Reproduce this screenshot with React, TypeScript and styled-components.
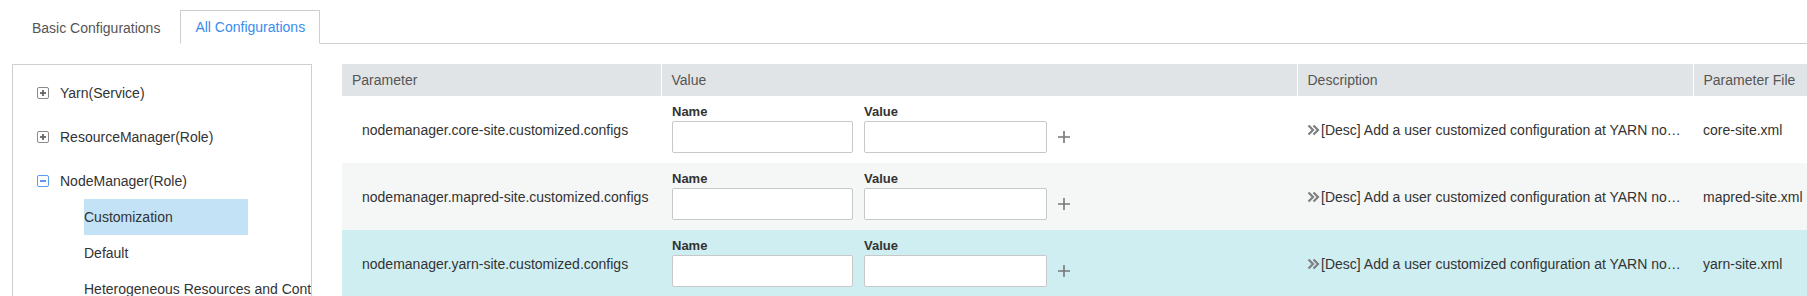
import React from 'react';
import styled, { createGlobalStyle } from 'styled-components';

interface ConfigRow {
  parameter: string;
  description: string;
  file: string;
}

const rows: ConfigRow[] = [
  {
    parameter: 'nodemanager.core-site.customized.configs',
    description: '[Desc] Add a user customized configuration at YARN nodemanager level to core-site.xml',
    file: 'core-site.xml',
  },
  {
    parameter: 'nodemanager.mapred-site.customized.configs',
    description: '[Desc] Add a user customized configuration at YARN nodemanager level to mapred-site.xml',
    file: 'mapred-site.xml',
  },
  {
    parameter: 'nodemanager.yarn-site.customized.configs',
    description: '[Desc] Add a user customized configuration at YARN nodemanager level to yarn-site.xml',
    file: 'yarn-site.xml',
  },
];

const GlobalStyle = createGlobalStyle`
  html, body {
    margin: 0;
    padding: 0;
    background: #fff;
    overflow: hidden;
  }
  body {
    font-family: "Liberation Sans", Arial, sans-serif;
    font-size: 14px;
    color: #333;
  }
`;

const Page = styled.div`
  padding: 10px 0 0 12px;
  height: 296px;
  box-sizing: border-box;
  overflow: hidden;
`;

const TabBar = styled.div`
  display: flex;
  height: 34px;
  box-sizing: border-box;
  border-bottom: 1px solid #cfcfcf;
`;

const Tab = styled.div<{ $active?: boolean }>`
  display: flex;
  align-items: center;
  padding: 0 ${(p) => (p.$active ? '14px' : '19px')};
  height: 34px;
  box-sizing: border-box;
  font-size: 14px;
  color: ${(p) => (p.$active ? '#3b8ced' : '#555')};
  background: #fff;
  border: 1px solid ${(p) => (p.$active ? '#cfcfcf' : 'transparent')};
  border-bottom: ${(p) => (p.$active ? '1px solid #fff' : 'none')};
  margin-bottom: ${(p) => (p.$active ? '-1px' : '0')};
  white-space: nowrap;
`;

const Main = styled.div`
  display: flex;
  gap: 30px;
  margin-top: 20px;
`;

const TreePanel = styled.div`
  width: 300px;
  flex: none;
  height: 280px;
  box-sizing: border-box;
  border: 1px solid #cfcfcf;
  padding-top: 10px;
  overflow: hidden;
`;

const TreeNode = styled.div`
  display: flex;
  align-items: center;
  height: 36px;
  padding-left: 24px;
  white-space: nowrap;

  & + & {
    margin-top: 8px;
  }
`;

const ToggleIcon = styled.svg`
  width: 12px;
  height: 12px;
  margin-right: 11px;
  flex: none;
`;

const TreeChild = styled.div<{ $selected?: boolean }>`
  width: 164px;
  height: 36px;
  line-height: 36px;
  margin-left: 71px;
  white-space: nowrap;
  background: ${(p) => (p.$selected ? '#c3e2f5' : 'transparent')};
`;

const TableWrap = styled.div`
  flex: 1;
  overflow: hidden;
`;

const Table = styled.table`
  border-collapse: collapse;
  table-layout: fixed;
  width: 1551px;
`;

const HeadCell = styled.th<{ $width: number }>`
  width: ${(p) => p.$width}px;
  height: 32px;
  padding: 0 10px;
  background: #e1e4e6;
  color: #555;
  font-weight: normal;
  font-size: 14px;
  text-align: left;
  box-sizing: border-box;

  & + & {
    border-left: 1px solid #fff;
  }
`;

const BodyRow = styled.tr<{ $bg: string }>`
  height: 67px;
  background: ${(p) => p.$bg};
`;

const ParamCell = styled.td`
  padding: 0 10px 0 20px;
  white-space: nowrap;
  overflow: hidden;
`;

const ValueCell = styled.td`
  padding: 8px 11px 10px;
  vertical-align: top;
`;

const FieldRow = styled.div`
  display: flex;
  align-items: flex-end;
  gap: 11px;
`;

const Field = styled.label`
  display: flex;
  flex-direction: column;
  gap: 2px;
`;

const FieldLabel = styled.span`
  font-size: 13px;
  font-weight: bold;
  line-height: 15px;
  color: #333;
`;

const Input = styled.input<{ $width: number }>`
  width: ${(p) => p.$width}px;
  height: 32px;
  box-sizing: border-box;
  border: 1px solid #c8c8c8;
  border-radius: 2px;
  background: #fff;
  padding: 0 8px;
  font: inherit;
  outline: none;
`;

const AddButton = styled.span`
  display: flex;
  align-items: center;
  height: 32px;
`;

const DescCell = styled.td`
  padding: 0 9px 0 10px;
  overflow: hidden;
`;

const DescText = styled.div`
  display: flex;
  align-items: center;
  white-space: nowrap;
  overflow: hidden;
`;

const DescClip = styled.span`
  flex: 1;
  overflow: hidden;
  text-overflow: ellipsis;
  min-width: 0;
`;

const FileCell = styled.td`
  padding: 0 10px;
  white-space: nowrap;
`;

const BoxIcon = ({ open }: { open?: boolean }) => (
  <ToggleIcon viewBox="0 0 12 12">
    <rect
      x="0.5"
      y="0.5"
      width="11"
      height="11"
      rx="1.5"
      fill="#fff"
      stroke={open ? '#5b9cf0' : '#8a8a8a'}
    />
    <path d="M3 6H9" stroke={open ? '#4a8fee' : '#666'} strokeWidth="1.8" />
    {!open && <path d="M6 3V9" stroke="#666" strokeWidth="1.8" />}
  </ToggleIcon>
);

const Chevrons = () => (
  <svg width="13" height="12" viewBox="0 0 13 12" style={{ flex: 'none', marginRight: 1 }}>
    <path d="M1.5 1.5L6 6L1.5 10.5M6.5 1.5L11 6L6.5 10.5" fill="none" stroke="#7f7f7f" strokeWidth="2.2" />
  </svg>
);

const Plus = () => (
  <svg width="12" height="12" viewBox="0 0 12 12">
    <path d="M0 6H12M6 0V12" stroke="#777" strokeWidth="1.6" />
  </svg>
);

const rowColors = ['#ffffff', '#f5f7f7', '#cfeef2'];

export default function App() {
  return (
    <>
      <GlobalStyle />
      <Page>
        <TabBar>
          <Tab>Basic Configurations</Tab>
          <Tab $active>All Configurations</Tab>
        </TabBar>
        <Main>
          <TreePanel>
            <TreeNode>
              <BoxIcon />
              Yarn(Service)
            </TreeNode>
            <TreeNode>
              <BoxIcon />
              ResourceManager(Role)
            </TreeNode>
            <TreeNode>
              <BoxIcon open />
              NodeManager(Role)
            </TreeNode>
            <TreeChild $selected>Customization</TreeChild>
            <TreeChild>Default</TreeChild>
            <TreeChild>Heterogeneous Resources and Containers</TreeChild>
          </TreePanel>
          <TableWrap>
            <Table>
              <thead>
                <tr>
                  <HeadCell $width={319}>Parameter</HeadCell>
                  <HeadCell $width={636}>Value</HeadCell>
                  <HeadCell $width={396}>Description</HeadCell>
                  <HeadCell $width={200}>Parameter File</HeadCell>
                </tr>
              </thead>
              <tbody>
                {rows.map((row, index) => (
                  <BodyRow key={row.parameter} $bg={rowColors[index]}>
                    <ParamCell>{row.parameter}</ParamCell>
                    <ValueCell>
                      <FieldRow>
                        <Field>
                          <FieldLabel>Name</FieldLabel>
                          <Input $width={181} />
                        </Field>
                        <Field>
                          <FieldLabel>Value</FieldLabel>
                          <Input $width={183} />
                        </Field>
                        <AddButton>
                          <Plus />
                        </AddButton>
                      </FieldRow>
                    </ValueCell>
                    <DescCell>
                      <DescText>
                        <Chevrons />
                        <DescClip>{row.description}</DescClip>
                      </DescText>
                    </DescCell>
                    <FileCell>{row.file}</FileCell>
                  </BodyRow>
                ))}
              </tbody>
            </Table>
          </TableWrap>
        </Main>
      </Page>
    </>
  );
}
